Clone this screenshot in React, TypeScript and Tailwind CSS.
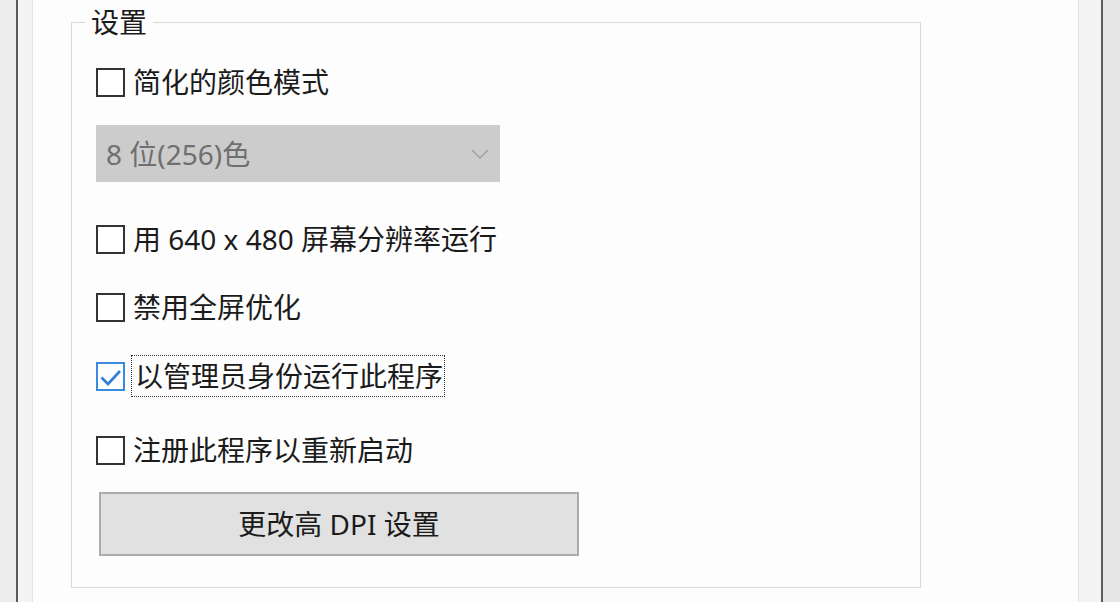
const font = { fontFamily: '"Noto Sans", "Noto Sans CJK SC", sans-serif' };

function Box({ checked }: { checked?: boolean }) {
  if (checked) {
    return (
      <div className="w-[29px] h-[29px] shrink-0 border-2 border-[#3a8ae0] bg-white flex items-center justify-center">
        <svg width="25" height="25" viewBox="0 0 25 25" fill="none">
          <path d="M3.5 13.5 L10 20 L22 7" stroke="#2f7fd6" strokeWidth="2.6" />
        </svg>
      </div>
    );
  }
  return <div className="w-[29px] h-[29px] shrink-0 border-2 border-[#333333] bg-white" />;
}

function Option({ label, checked, focused }: { label: string; checked?: boolean; focused?: boolean }) {
  return (
    <div className="flex items-center h-[36px]">
      <Box checked={checked} />
      {focused ? (
        <span className="ml-[6px] h-[42px] flex items-center whitespace-nowrap border border-dotted border-[#333333] pl-[3px] pr-[1px]">
          {label}
        </span>
      ) : (
        <span className="ml-[7px] pl-[1px] whitespace-nowrap">{label}</span>
      )}
    </div>
  );
}

export default function App() {
  return (
    <div className="w-[1120px] h-[602px] flex bg-[#f0f0f0] overflow-hidden text-[28px] leading-none text-[#1b1b1b]" style={font}>
      <div className="w-[16px] bg-[#ededed]" />
      <div className="w-[2px] bg-[#5a5a5a]" />
      <div className="w-[15px] bg-[#f4f4f4] border-r border-[#e2e2e2]" />
      <div className="w-[1045px] bg-[#fdfdfd] pt-[6px] pl-[38px]">
        <fieldset className="w-[850px] h-[582px] border border-[#d9d9d9]">
          <legend className="ml-[13px] px-[6px] h-[32px] leading-[32px]">设置</legend>
          <div className="pl-[24px]">
            <div className="mt-[26px]">
              <Option label="简化的颜色模式" />
            </div>
            <div className="mt-[25px] w-[404px] h-[57px] bg-[#cccccc] flex items-center justify-between pl-[10px] pr-[11px] text-[#6f6f6f]">
              <span>8 位(256)色</span>
              <svg width="18" height="10" viewBox="0 0 18 10" fill="none">
                <path d="M1 1 L9 9 L17 1" stroke="#a0a0a0" strokeWidth="1.4" />
              </svg>
            </div>
            <div className="mt-[39px]">
              <Option label="用 640 x 480 屏幕分辨率运行" />
            </div>
            <div className="mt-[32px]">
              <Option label="禁用全屏优化" />
            </div>
            <div className="mt-[33px]">
              <Option label="以管理员身份运行此程序" checked focused />
            </div>
            <div className="mt-[38px]">
              <Option label="注册此程序以重新启动" />
            </div>
            <button className="mt-[24px] ml-[3px] w-[480px] h-[64px] bg-[#e1e1e1] border-2 border-[#adadad] flex items-center justify-center text-[#1b1b1b]">
              更改高 DPI 设置
            </button>
          </div>
        </fieldset>
      </div>
      <div className="w-[23px] bg-[#f3f3f3] border-l border-[#e6e6e6]" />
      <div className="w-[2px] bg-[#5c5c5c]" />
      <div className="flex-1 bg-[#e6e6e6]" />
    </div>
  );
}
